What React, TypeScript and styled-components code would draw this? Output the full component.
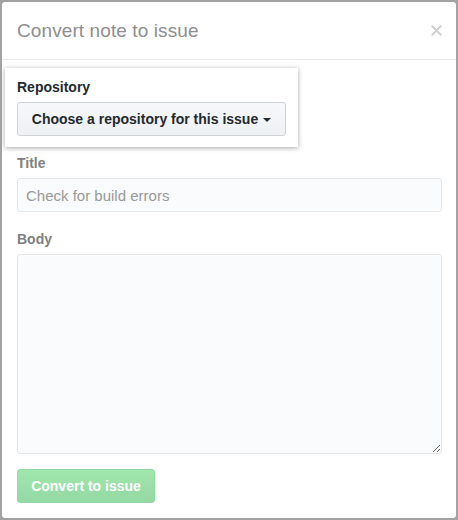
import React from "react";
import styled, { createGlobalStyle } from "styled-components";

const Global = createGlobalStyle`
  html, body { margin: 0; padding: 0; background: #a3a3a3; }
  body { font-family: "Liberation Sans", Arial, sans-serif; }
  * { box-sizing: border-box; }
`;

const Page = styled.div`
  width: 458px;
  height: 520px;
  padding: 2px;
`;

const Dialog = styled.div`
  width: 454px;
  height: 516px;
  background: #fff;
  border-radius: 3px;
  display: flex;
  flex-direction: column;
`;

const Header = styled.div`
  height: 58px;
  flex: 0 0 58px;
  display: flex;
  align-items: center;
  justify-content: space-between;
  padding: 0 14px 0 15px;
  border-bottom: 1px solid #eaeaea;
`;

const HeaderTitle = styled.h2`
  margin: 0;
  font-size: 19px;
  font-weight: 400;
  color: #8e8e8e;
  letter-spacing: 0.1px;
`;

const Close = styled.span`
  display: flex;
  width: 14px;
  height: 14px;
  align-items: center;
  justify-content: center;
  margin-right: -1px;
`;

const Body = styled.div`
  display: flex;
  flex-direction: column;
  padding: 8px 13px 0 3px;
`;

const Highlight = styled.div`
  width: 293px;
  background: #fff;
  padding: 10px 12px 11px 12px;
  box-shadow: 0 1px 5px rgba(0, 0, 0, 0.35);
  display: flex;
  flex-direction: column;
  gap: 6px;
`;

const Field = styled.div<{ $top: number }>`
  display: flex;
  flex-direction: column;
  padding-left: 12px;
  gap: 6px;
  margin-top: ${(p) => p.$top}px;
`;

const Label = styled.label<{ $dim?: boolean }>`
  font-size: 14px;
  font-weight: 700;
  color: ${(p) => (p.$dim ? "#808080" : "#24292e")};
  line-height: 18px;
`;

const SelectButton = styled.button`
  width: 269px;
  height: 34px;
  border: 1px solid #cfd3d7;
  border-radius: 3px;
  background: linear-gradient(#f6f8fa, #eef1f4);
  font-family: inherit;
  font-size: 14px;
  font-weight: 700;
  color: #24292e;
  display: flex;
  align-items: center;
  justify-content: center;
  gap: 5px;
  padding: 0 8px;
  white-space: nowrap;
`;

const Caret = styled.span`
  width: 0;
  height: 0;
  border-left: 4px solid transparent;
  border-right: 4px solid transparent;
  border-top: 4px solid #24292e;
  margin-top: 2px;
`;

const Input = styled.input`
  width: 425px;
  height: 34px;
  border: 1px solid #e6e8ea;
  border-radius: 3px;
  background: #fafbfc;
  padding: 0 8px;
  font-family: inherit;
  font-size: 15px;
  color: #444;
  outline: none;
  &::placeholder { color: #999; }
`;

const TextArea = styled.textarea`
  width: 425px;
  height: 200px;
  border: 1px solid #e6e8ea;
  border-radius: 3px;
  background: #fafbfc;
  padding: 8px;
  font-family: inherit;
  font-size: 14px;
  outline: none;
  resize: vertical;
  display: block;
`;

const Submit = styled.button`
  width: 138px;
  height: 34px;
  border: 1px solid #93d9a1;
  border-radius: 3px;
  background: linear-gradient(#a0e8ad, #94d8a3);
  color: #fff;
  font-family: inherit;
  font-size: 14px;
  font-weight: 700;
  padding: 0;
`;

export default function App() {
  return (
    <>
      <Global />
      <Page>
        <Dialog>
          <Header>
            <HeaderTitle>Convert note to issue</HeaderTitle>
            <Close>
              <svg width="11" height="11" viewBox="0 0 12 12">
                <path d="M1.5 1.5 L10.5 10.5 M10.5 1.5 L1.5 10.5" stroke="#cccccc" strokeWidth="2" strokeLinecap="square" />
              </svg>
            </Close>
          </Header>
          <Body>
            <Highlight>
              <Label>Repository</Label>
              <SelectButton>
                Choose a repository for this issue <Caret />
              </SelectButton>
            </Highlight>
            <Field $top={7}>
              <Label $dim>Title</Label>
              <Input placeholder="Check for build errors" />
            </Field>
            <Field $top={18}>
              <Label $dim>Body</Label>
              <TextArea />
            </Field>
            <Field $top={15}>
              <div>
                <Submit>Convert to issue</Submit>
              </div>
            </Field>
          </Body>
        </Dialog>
      </Page>
    </>
  );
}
